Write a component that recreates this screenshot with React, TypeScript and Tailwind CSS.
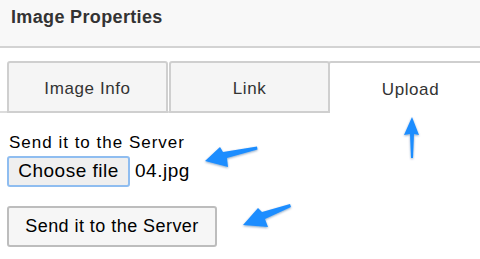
import React from 'react';

const font = { fontFamily: '"Liberation Sans", Arial, Helvetica, sans-serif' };

const Arrows: React.FC = () => (
  <svg className="absolute left-0 top-0 pointer-events-none" width="480" height="259" viewBox="0 0 480 259">
    <defs>
      <filter id="sh" x="-20%" y="-20%" width="140%" height="140%">
        <feDropShadow dx="0" dy="1" stdDeviation="0.8" floodColor="#0b3d7a" floodOpacity="0.45" />
      </filter>
    </defs>
    <g fill="#1d8dff" filter="url(#sh)">
      <polygon points="205,161 220,147 223,152 257,146.5 257.5,149.5 227,158 228,167" />
      <polygon points="243,225 258,208 262,212 290,204 291,207 265,219 268,227" />
      <polygon points="412,117 419,135 414,134 413,158 411,158 410,134 404,135" />
    </g>
  </svg>
);

const App: React.FC = () => {
  return (
    <div className="relative w-[480px] h-[259px] overflow-hidden bg-white text-[#333]" style={font}>
      <div className="h-[48px] bg-[#f8f8f8] border-b-2 border-[#d3d3d3] pl-[11px] pt-[7px]">
        <h1 className="text-[18px] font-bold leading-[20px] text-[#333] tracking-[0.35px]">Image Properties</h1>
      </div>

      <div className="mt-[13px] flex items-end border-b-2 border-[#dcdcdc] pl-[7px] h-[52px]">
        <div className="w-[161px] shrink-0 h-[52px] -mb-[2px] pt-[3px] flex items-center justify-center bg-[#f5f5f5] border-2 border-[#cfcfcf] rounded-t-[3px] text-[17px] tracking-[0.6px]">
          Image Info
        </div>
        <div className="w-[161px] shrink-0 h-[52px] -mb-[2px] ml-[1px] pt-[3px] flex items-center justify-center bg-[#f5f5f5] border-2 border-[#cfcfcf] rounded-t-[3px] text-[17px] tracking-[0.6px]">
          Link
        </div>
        <div className="w-[163px] shrink-0 h-[52px] -mb-[2px] -ml-[2px] pt-[3px] flex items-center justify-center bg-white border-t-2 border-l-2 border-[#cfcfcf] rounded-tl-[3px] text-[17px] tracking-[0.6px]">
          Upload
        </div>
      </div>

      <div className="pl-[9px] pt-[20px]">
        <div className="text-[17px] leading-[20px] text-black tracking-[1px]">Send it to the Server</div>
        <div className="mt-[3px] -ml-[1px] flex items-center">
          <div className="h-[31px] w-[123px] -ml-[1px] flex items-center justify-center bg-[#efefef] border-2 border-[#8fbdf0] rounded-[3px] text-[19px] text-black tracking-[0.5px]">
            Choose file
          </div>
          <span className="ml-[5px] text-[19px] text-black tracking-[0.5px]">04.jpg</span>
        </div>
        <button className="mt-[19px] -ml-[2px] h-[41px] w-[210px] flex items-center justify-center bg-[#f6f6f6] border-2 border-[#bdbdbd] rounded-[3px] text-[18px] text-black tracking-[0.45px]">
          Send it to the Server
        </button>
      </div>

      <Arrows />
    </div>
  );
};

export default App;
